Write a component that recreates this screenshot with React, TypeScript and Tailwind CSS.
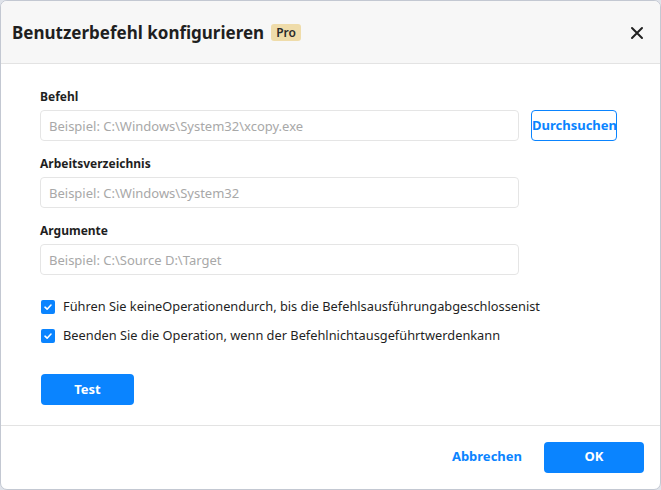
import React, { useState } from 'react';

const font = { fontFamily: '"Segoe UI", "Noto Sans", "Open Sans", sans-serif' };

const Field: React.FC<{ label: string; placeholder: string; extra?: React.ReactNode }> = ({ label, placeholder, extra }) => (
  <div className="flex flex-col">
    <label className="text-[12px] font-bold text-[#1f1f1f] leading-[16px] mb-[5px]">{label}</label>
    <div className="flex items-center gap-[12px]">
      <input
        placeholder={placeholder}
        className="w-[479px] h-[31px] rounded-[4px] border border-[#e5e5e5] bg-white px-[8px] text-[13px] text-[#333] placeholder:text-[#a8a8a8] outline-none"
      />
      {extra}
    </div>
  </div>
);

const Check: React.FC<{ text: string }> = ({ text }) => {
  const [on, setOn] = useState(true);
  return (
    <label className="flex items-center gap-[8px] cursor-pointer" onClick={() => setOn(!on)}>
      <span className={`w-[14px] h-[14px] rounded-[2px] flex items-center justify-center ${on ? 'bg-[#0a84ff]' : 'border border-[#999]'}`}>
        {on && (
          <svg width="10" height="10" viewBox="0 0 10 10" fill="none">
            <path d="M2 5.2 L4.1 7.2 L8 3" stroke="white" strokeWidth="1.6" strokeLinecap="round" strokeLinejoin="round" />
          </svg>
        )}
      </span>
      <span className="text-[12.8px] text-[#1f1f1f]">{text}</span>
    </label>
  );
};

export default function App() {
  return (
    <div className="w-[661px] h-[490px] bg-[#dfe3ea]" style={font}>
      <div className="w-full h-full flex flex-col bg-white border border-[#c3c8d2] rounded-[7px] overflow-hidden">
        <div className="h-[63px] shrink-0 flex items-center justify-between bg-[#f7f7f7] border-b border-[#e3e3e3] pl-[11px] pr-[16px]">
          <div className="flex items-center gap-[7px] pt-[1px]">
            <h1 className="text-[17px] font-bold text-[#1f1f1f]">Benutzerbefehl konfigurieren</h1>
            <span className="h-[17px] px-[5px] rounded-[3px] bg-[#efdcaa] text-[12px] font-semibold text-[#2a2a2a] leading-[17px]">Pro</span>
          </div>
          <svg width="14" height="14" viewBox="0 0 14 14" className="mt-[1px]">
            <path d="M2 2 L12 12 M12 2 L2 12" stroke="#222" strokeWidth="2" strokeLinecap="round" />
          </svg>
        </div>

        <div className="flex-1 flex flex-col pl-[39px] pt-[25px]">
          <div className="flex flex-col gap-[15px]">
            <Field
              label="Befehl"
              placeholder="Beispiel: C:\Windows\System32\xcopy.exe"
              extra={
                <button className="h-[31px] w-[86px] rounded-[4px] border border-[#0a84ff] text-[13px] font-bold text-[#0a84ff]">
                  Durchsuchen
                </button>
              }
            />
            <Field label="Arbeitsverzeichnis" placeholder="Beispiel: C:\Windows\System32" />
            <Field label="Argumente" placeholder="Beispiel: C:\Source D:\Target" />
          </div>

          <div className="flex flex-col gap-[10px] mt-[22px] pl-[1px]">
            <Check text="Führen Sie keineOperationendurch, bis die Befehlsausführungabgeschlossenist" />
            <Check text="Beenden Sie die Operation, wenn der Befehlnichtausgeführtwerdenkann" />
          </div>

          <button className="mt-[29px] ml-[1px] w-[93px] h-[31px] rounded-[4px] bg-[#0a84ff] text-white text-[13px] font-bold">
            Test
          </button>
        </div>

        <div className="h-[64px] shrink-0 flex items-center justify-end gap-[22px] border-t border-[#e3e3e3] pr-[16px] pb-[1px]">
          <button className="text-[13px] font-bold text-[#0a84ff]">Abbrechen</button>
          <button className="w-[100px] h-[31px] rounded-[4px] bg-[#0a84ff] text-white text-[13px] font-bold">OK</button>
        </div>
      </div>
    </div>
  );
}
